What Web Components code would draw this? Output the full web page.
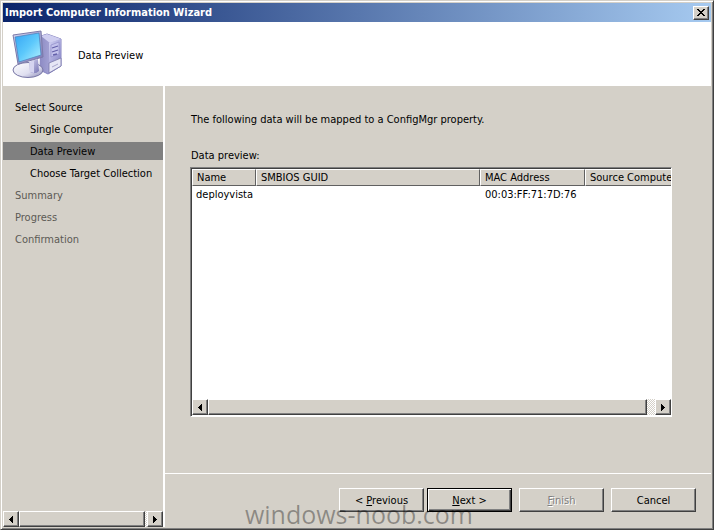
<!DOCTYPE html>
<html lang="en">
<head>
<meta charset="utf-8">
<title>Import Computer Information Wizard</title>
<style>
html,body{height:100%;margin:0;overflow:hidden}
body{font:11px/14px "DejaVu Sans Condensed","Noto Sans",sans-serif;color:#000;background:#d4d0c8}
</style>
</head>
<body>
<wizard-window></wizard-window>
<script>
const define = (name, html, setup) => {
  const template = document.createElement('template');
  template.innerHTML = html;
  customElements.define(name, class extends HTMLElement {
    connectedCallback() {
      if (this.shadowRoot) return;
      this.attachShadow({mode: 'open'}).append(template.content.cloneNode(true));
      if (setup) setup(this, this.shadowRoot);
    }
  });
};

define('title-bar', `
<style>
:host{display:flex;align-items:center;justify-content:space-between;height:19px;padding:0 2px;box-sizing:border-box;background:linear-gradient(90deg,#0a246a,#a6caf0);color:#fff;flex:none}
h1{font:inherit;font-weight:bold;margin:0}
button{display:grid;place-items:center;width:16px;height:14px;padding:0;border:1px solid;border-color:#fff #404040 #404040 #fff;box-shadow:inset -1px -1px #808080;background:#d4d0c8}
</style>
<h1><slot></slot></h1>
<button aria-label="Close"><svg width="8" height="7" viewBox="0 0 8 7" shape-rendering="crispEdges"><path d="M0 0h2v1h1v1h2V1h1V0h2v1H7v1H6v1H5v1h1v1h1v1h1v1H6V6H5V5H3v1H2v1H0V6h1V5h1V4h1V3H2V2H1V1H0z"/></svg></button>`);

define('computer-icon', `
<style>:host{display:block;flex:none}svg{display:block}</style>
<svg width="50" height="50" viewBox="0 0 50 50">
<defs>
<linearGradient id="s" x1="0" y1="0" x2="1" y2="1"><stop offset="0" stop-color="#35a5f4"/><stop offset=".5" stop-color="#5cc8fb"/><stop offset="1" stop-color="#b5f3ff"/></linearGradient>
<linearGradient id="f" x1="0" y1="0" x2="1" y2="1"><stop offset="0" stop-color="#d9d9f3"/><stop offset="1" stop-color="#7774b3"/></linearGradient>
<linearGradient id="t" x1="0" x2="1"><stop offset="0" stop-color="#8d8bc4"/><stop offset="1" stop-color="#bcbce6"/></linearGradient>
<linearGradient id="r" x1="0" x2="1" y2="1"><stop offset="0" stop-color="#d2d2f4"/><stop offset="1" stop-color="#8886c6"/></linearGradient>
<linearGradient id="b" x1="0" x2="1" y2="1"><stop offset="0" stop-color="#fff"/><stop offset=".6" stop-color="#dfdff0"/><stop offset="1" stop-color="#8584b3"/></linearGradient>
</defs>
<path d="M29 6 35 4 49 9v27l-13 8-8-4z" fill="url(#t)" stroke="#8583c0"/>
<path d="M29 6 35 4 49 9 38 13z" fill="#cfcef0"/>
<path d="M37 13 49 9v19l-12 5z" fill="url(#r)"/>
<path d="M39 15l8-3v12l-8 3z" fill="#c3c2ec" stroke="#8f8dc8" stroke-width=".7"/>
<path d="M40 18l6-2M40 22l6-2M41 25l4-1" stroke="#6461aa" stroke-width="1.300"/>
<path d="M37 33l12-5v8l-12 7z" fill="#e6e6f5" stroke="#7977aa" stroke-width=".8"/>
<path d="M40 37l6-3" stroke="#a9a7cc"/>
<ellipse cx="16" cy="40" rx="15" ry="7.500" fill="url(#b)" stroke="#7775a5"/>
<path d="M17 32l9-3 1 12q-4 4-9 1z" fill="url(#f)"/>
<path d="M18 32l4-2v13l-4-1z" fill="#d5d4f0"/>
<path d="M1 5 29 1 31 27 6 34z" fill="url(#f)" stroke="#7c7ba9"/>
<path d="M3 7 27 3 29 25 7 32z" fill="url(#s)" stroke="#487fba" stroke-width=".7"/>
</svg>`);

define('wizard-header', `
<style>
:host{display:flex;align-items:center;gap:16px;height:64px;padding-left:9px;background:#fff;flex:none}
h2{font:inherit;margin:0;padding-top:4px}
computer-icon{padding-top:2px}
</style>
<computer-icon></computer-icon><h2><slot></slot></h2>`);

define('wizard-step', `
<style>
:host{display:block;padding:3px 0 1px 12px;color:#000;white-space:nowrap}
:host([sub]){padding-left:27px}
:host([active]){background:#808080}
:host([off]){color:#5c5a55}
</style>
<slot></slot>`);

define('scroll-bar', `
<style>
:host{display:flex;height:16px;flex:none;background:repeating-conic-gradient(#fff 0 25%,#d4d0c8 0 50%) 0 0/2px 2px}
button,.thumb{box-sizing:border-box;padding:0;margin:0;background:#d4d0c8;border:1px solid;border-color:#fff #404040 #404040 #fff;box-shadow:inset -1px -1px #808080}
button{display:grid;place-items:center;width:16px;flex:none}
.thumb{flex:1;margin-right:var(--rest,8px)}
</style>
<button aria-label="Scroll left"><svg width="4" height="7" shape-rendering="crispEdges"><path d="M4 0v7H3V6H2V5H1V4H0V3h1V2h1V1h1V0z"/></svg></button>
<div class="thumb"></div>
<button aria-label="Scroll right"><svg width="4" height="7" shape-rendering="crispEdges"><path d="M0 0v7h1V6h1V5h1V4h1V3H3V2H2V1H1V0z"/></svg></button>`);

define('wizard-steps', `
<style>
:host{display:flex;flex-direction:column;justify-content:space-between;width:160px;flex:none;border-right:2px solid #fff}
nav{display:flex;flex-direction:column;gap:4px;padding-top:12px}
scroll-bar{--rest:2px}
</style>
<nav aria-label="Steps"><slot></slot></nav><scroll-bar></scroll-bar>`);

define('data-list', `
<style>
:host{display:flex;flex-direction:column;flex:1;min-height:0;background:#fff;border:1px solid;border-color:#808080 #fff #fff #808080;box-shadow:inset 1px 1px #404040;padding:1px 0 1px 1px}
.view{flex:1;overflow:hidden}
table{table-layout:fixed;border-collapse:separate;border-spacing:0;width:560px}
th{font-weight:normal;text-align:left;height:17px;padding:0 4px;box-sizing:border-box;background:#d4d0c8;border:1px solid;border-color:#fff #606060 #606060 #fff;white-space:nowrap}
td{padding:2px 4px;white-space:nowrap}
td:nth-child(n+2){padding-left:5px}
</style>
<div class="view"><table aria-label="Data preview">
<colgroup><col style="width:64px"><col style="width:224px"><col style="width:105px"><col></colgroup>
<thead><tr><th>Name</th><th>SMBIOS GUID</th><th>MAC Address</th><th>Source Computer</th></tr></thead>
<tbody><tr><td>deployvista</td><td></td><td>00:03:FF:71:7D:76</td><td></td></tr></tbody>
</table></div>
<scroll-bar></scroll-bar>`);

define('preview-page', `
<style>
:host{display:flex;flex-direction:column;flex:1;min-height:0;padding:27px 39px 56px 25px}
p{margin:0;padding-left:1px}
.label{margin:22px 0 4px}
</style>
<p>The following data will be mapped to a ConfigMgr property.</p>
<p class="label">Data preview:</p>
<data-list></data-list>`);

define('wizard-button', `
<style>
:host{display:block;width:85px}
button{font:inherit;color:inherit;width:100%;height:24px;padding:2px 0 0;background:#d4d0c8;border:1px solid;border-color:#fff #404040 #404040 #fff;box-shadow:inset -1px -1px #808080}
:host([primary]) button{border-color:#000;box-shadow:inset 1px 1px #fff,inset -1px -1px #404040,inset -2px -2px #808080}
button:disabled{color:#808080;text-shadow:1px 1px #fff}
</style>
<button><slot></slot></button>`, (host, root) => {
  root.querySelector('button').disabled = host.hasAttribute('off');
});

define('wizard-footer', `
<style>
:host{display:flex;justify-content:flex-end;height:54px;box-sizing:border-box;border-top:1px solid #fff;padding:14px 15px 0 0;flex:none;position:relative}
.pair{display:flex;gap:3px}
.rest{display:flex;gap:7px;margin-left:7px}
.mark{position:absolute;right:238px;bottom:-4px;font:25px/34px "Open Sans","Noto Sans",sans-serif;color:#00000058;white-space:nowrap;pointer-events:none}
</style>
<div class="pair"><wizard-button>&lt; <u>P</u>revious</wizard-button><wizard-button primary><u>N</u>ext &gt;</wizard-button></div>
<div class="rest"><wizard-button off><u>F</u>inish</wizard-button><wizard-button>Cancel</wizard-button></div>
<div class="mark">windows-noob.com</div>`);

define('wizard-window', `
<style>
:host{display:flex;flex-direction:column;height:100%;box-sizing:border-box;background:#d4d0c8;border:1px solid;border-color:#d4d0c8 #404040 #404040 #d4d0c8;box-shadow:inset 1px 1px #fff,inset -1px -1px #808080;padding:2px}
.body{display:flex;flex:1;min-height:0}
.main{display:flex;flex-direction:column;flex:1;min-width:0}
</style>
<title-bar>Import Computer Information Wizard</title-bar>
<wizard-header>Data Preview</wizard-header>
<div class="body">
<wizard-steps>
<wizard-step>Select Source</wizard-step>
<wizard-step sub>Single Computer</wizard-step>
<wizard-step sub active>Data Preview</wizard-step>
<wizard-step sub>Choose Target Collection</wizard-step>
<wizard-step off>Summary</wizard-step>
<wizard-step off>Progress</wizard-step>
<wizard-step off>Confirmation</wizard-step>
</wizard-steps>
<div class="main"><preview-page></preview-page><wizard-footer></wizard-footer></div>
</div>`);
</script>
</body>
</html>
